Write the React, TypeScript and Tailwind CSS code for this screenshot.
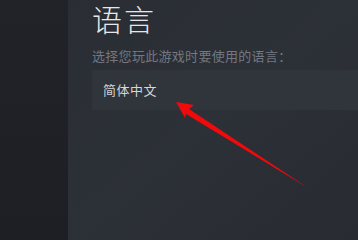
export default function App() {
  return (
    <div
      className="relative flex h-screen min-h-[217px] w-full overflow-hidden bg-[#1f2126]"
      style={{ fontFamily: '"Noto Sans CJK SC", "Noto Sans", sans-serif' }}
    >
      {/* left rail */}
      <div className="h-full w-[68px] shrink-0 bg-gradient-to-b from-[#212329] to-[#1d1f24]" />

      {/* settings panel */}
      <div className="flex h-full flex-1 flex-col bg-gradient-to-br from-[#2a2d34] via-[#2c3037] to-[#282b31] pl-[24px]">
        <h1 className="pt-[1px] text-[30px] font-light leading-[34px] tracking-[2px] text-[#e6e7ea]">语言</h1>
        <p className="mt-[11px] text-[13px] leading-[20px] tracking-[0.3px] text-[#737881]">选择您玩此游戏时要使用的语言：</p>
        <div className="mt-[4px] flex h-[40px] items-center bg-[#30343b] pl-[11px]">
          <span className="text-[13px] tracking-[0.5px] text-[#d4d6da]">简体中文</span>
        </div>
      </div>

      {/* annotation arrow */}
      <svg className="pointer-events-none absolute left-0 top-0" width="358" height="217" viewBox="0 0 358 217">
        <polygon points="176,102 194,105 189,109 308,188 186,114 185,118" fill="#f00a0a" />
      </svg>
    </div>
  );
}
